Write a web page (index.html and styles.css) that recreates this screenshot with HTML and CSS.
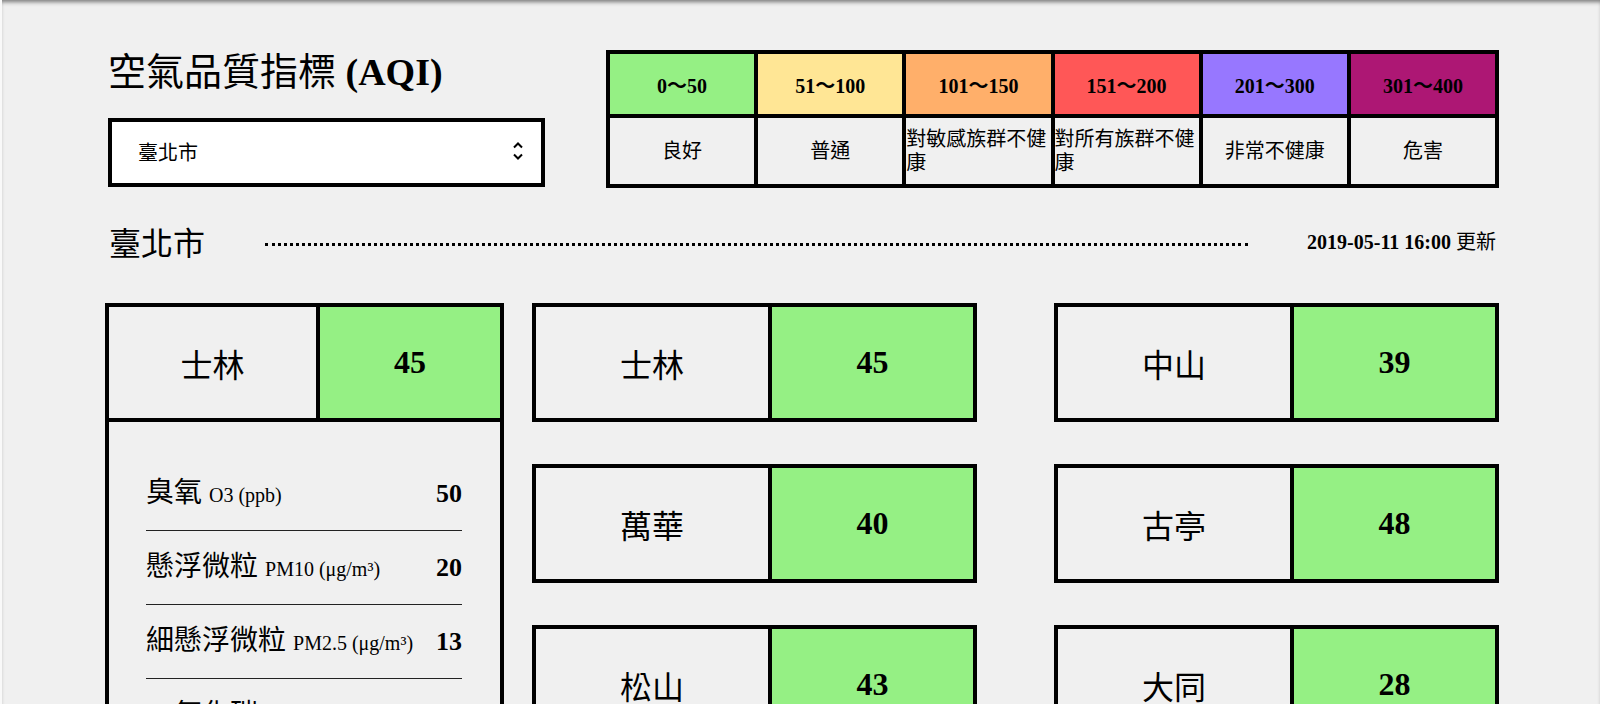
FILE: index.html
```html
<!DOCTYPE html>
<html lang="zh-Hant">
<head>
    <meta charset="UTF-8">
    <meta name="viewport" content="width=device-width, initial-scale=1.0">
    <title>空氣品質指標 (AQI)</title>
    <link rel="stylesheet" href="styles.css">
</head>
<body>
    <div class="container">
        <!-- Title, city picker and legend -->
        <header class="top">
            <div class="picker">
                <h1 class="title">空氣品質指標 <b>(AQI)</b></h1>
                <div class="select-wrap">
                    <select class="city-select">
                        <option>臺北市</option>
                        <option>新北市</option>
                        <option>桃園市</option>
                        <option>臺中市</option>
                        <option>高雄市</option>
                    </select>
                    <svg width="12" height="24" viewBox="0 0 12 24">
                        <path d="M2 8.5 L6 4.5 L10 8.5" fill="none" stroke="#000" stroke-width="2"/>
                        <path d="M2 15.5 L6 19.5 L10 15.5" fill="none" stroke="#000" stroke-width="2"/>
                    </svg>
                </div>
            </div>

            <ul class="levels">
                <li>
                    <div class="range good">0～50</div>
                    <div class="label">良好</div>
                </li>
                <li>
                    <div class="range moderate">51～100</div>
                    <div class="label">普通</div>
                </li>
                <li>
                    <div class="range sensitive">101～150</div>
                    <div class="label">對敏感族群不健康</div>
                </li>
                <li>
                    <div class="range unhealthy">151～200</div>
                    <div class="label">對所有族群不健康</div>
                </li>
                <li>
                    <div class="range very-unhealthy">201～300</div>
                    <div class="label">非常不健康</div>
                </li>
                <li>
                    <div class="range hazardous">301～400</div>
                    <div class="label">危害</div>
                </li>
            </ul>
        </header>

        <!-- City heading -->
        <div class="area-bar">
            <h2 class="area-name">臺北市</h2>
            <div class="dots"></div>
            <div class="updated"><b>2019-05-11 16:00</b> 更新</div>
        </div>

        <!-- Stations -->
        <section class="stations">
            <div class="card card-main">
                <div class="card-head">
                    <div class="site">士林</div>
                    <div class="aqi good">45</div>
                </div>
                <ul class="pollutants">
                    <li><span class="name">臭氧 <small>O3 (ppb)</small></span><span class="value">50</span></li>
                    <li><span class="name">懸浮微粒 <small>PM10 (μg/m³)</small></span><span class="value">20</span></li>
                    <li><span class="name">細懸浮微粒 <small>PM2.5 (μg/m³)</small></span><span class="value">13</span></li>
                    <li><span class="name">一氧化碳 <small>CO (ppm)</small></span><span class="value">0.3</span></li>
                    <li><span class="name">二氧化硫 <small>SO2 (ppb)</small></span><span class="value">2</span></li>
                    <li><span class="name">二氧化氮 <small>NO2 (ppb)</small></span><span class="value">11</span></li>
                </ul>
            </div>

            <div class="card-list">
                <div class="card">
                    <div class="card-head">
                        <div class="site">士林</div>
                        <div class="aqi good">45</div>
                    </div>
                </div>
                <div class="card">
                    <div class="card-head">
                        <div class="site">中山</div>
                        <div class="aqi good">39</div>
                    </div>
                </div>
                <div class="card">
                    <div class="card-head">
                        <div class="site">萬華</div>
                        <div class="aqi good">40</div>
                    </div>
                </div>
                <div class="card">
                    <div class="card-head">
                        <div class="site">古亭</div>
                        <div class="aqi good">48</div>
                    </div>
                </div>
                <div class="card">
                    <div class="card-head">
                        <div class="site">松山</div>
                        <div class="aqi good">43</div>
                    </div>
                </div>
                <div class="card">
                    <div class="card-head">
                        <div class="site">大同</div>
                        <div class="aqi good">28</div>
                    </div>
                </div>
            </div>
        </section>
    </div>
</body>
</html>
```

FILE: styles.css
```css
* {
    box-sizing: border-box;
}

body {
    margin: 0;
    min-height: 100vh;
    background-color: #f0f0f0;
    color: #000;
    font-family: "Liberation Serif", "Noto Sans CJK TC", serif;
    border-left: 2px solid #f9f9f9;
    box-shadow: inset 0 4px 4px -2px rgba(0, 0, 0, 0.5);
}

.container {
    width: 1394px;
    margin-left: 103px;
    padding: 50px 0 60px;
}

/* Header */
.top {
    display: flex;
    justify-content: space-between;
    align-items: flex-start;
}

.picker {
    padding-left: 3px;
}

.title {
    margin: 0;
    font-size: 38px;
    font-weight: normal;
    line-height: 44px;
}

.select-wrap {
    position: relative;
    margin-top: 24px;
}

.city-select {
    display: block;
    width: 437px;
    height: 69px;
    padding: 0 40px 0 26px;
    background-color: #fff;
    border: 4px solid #000;
    border-radius: 0;
    font: inherit;
    font-size: 20px;
    color: #000;
    appearance: none;
    -webkit-appearance: none;
    outline: none;
}

.select-wrap svg {
    position: absolute;
    top: 21px;
    right: 21px;
    pointer-events: none;
}

/* Legend */
.levels {
    display: grid;
    grid-template-columns: repeat(6, 1fr);
    width: 893px;
    margin: 0;
    padding: 0;
    list-style: none;
    border-top: 4px solid #000;
    border-left: 4px solid #000;
}

.levels li {
    border-right: 4px solid #000;
}

.range,
.label {
    display: flex;
    align-items: center;
    justify-content: center;
    border-bottom: 4px solid #000;
    font-size: 20px;
}

.range {
    height: 64px;
    font-weight: bold;
}

.label {
    height: 70px;
    line-height: 24px;
}

.good { background-color: #95f084; }
.moderate { background-color: #ffe695; }
.sensitive { background-color: #ffaf6a; }
.unhealthy { background-color: #ff5757; }
.very-unhealthy { background-color: #9777ff; }
.hazardous { background-color: #ad1774; }

/* City heading */
.area-bar {
    display: flex;
    align-items: center;
    margin: 36px 0 39px;
}

.area-name {
    margin: 0;
    padding-left: 4px;
    font-size: 32px;
    font-weight: normal;
    line-height: 40px;
}

.dots {
    flex: 1;
    margin: 0 59px 0 60px;
    border-bottom: 3px dotted #000;
}

.updated {
    margin-bottom: 8px;
    padding-right: 3px;
    font-size: 20px;
}

/* Station cards */
.stations {
    display: flex;
    align-items: flex-start;
}

.card {
    border: 4px solid #000;
}

.card-main {
    width: 399px;
    flex-shrink: 0;
}

.card-list {
    flex: 1;
    margin-left: 28px;
    display: flex;
    flex-wrap: wrap;
    justify-content: space-between;
    row-gap: 42px;
}

.card-list .card {
    width: 445px;
}

.card-head {
    display: grid;
    grid-template-columns: 54% 46%;
    height: 111px;
}

.card-main .card-head {
    height: 115px;
    border-bottom: 4px solid #000;
}

.site,
.aqi {
    display: flex;
    align-items: center;
    justify-content: center;
    font-size: 32px;
}

.site {
    border-right: 4px solid #000;
}

.aqi {
    font-weight: bold;
}

.pollutants {
    margin: 0;
    padding: 35px 38px 20px 37px;
    list-style: none;
}

.pollutants li {
    display: flex;
    justify-content: space-between;
    align-items: baseline;
    height: 74px;
    padding-top: 19px;
    border-bottom: 1px solid #222;
    line-height: 34px;
}

.name {
    font-size: 28px;
}

.name small {
    font-size: 20px;
    line-height: 1;
}

.value {
    font-size: 26px;
    font-weight: bold;
}
```
